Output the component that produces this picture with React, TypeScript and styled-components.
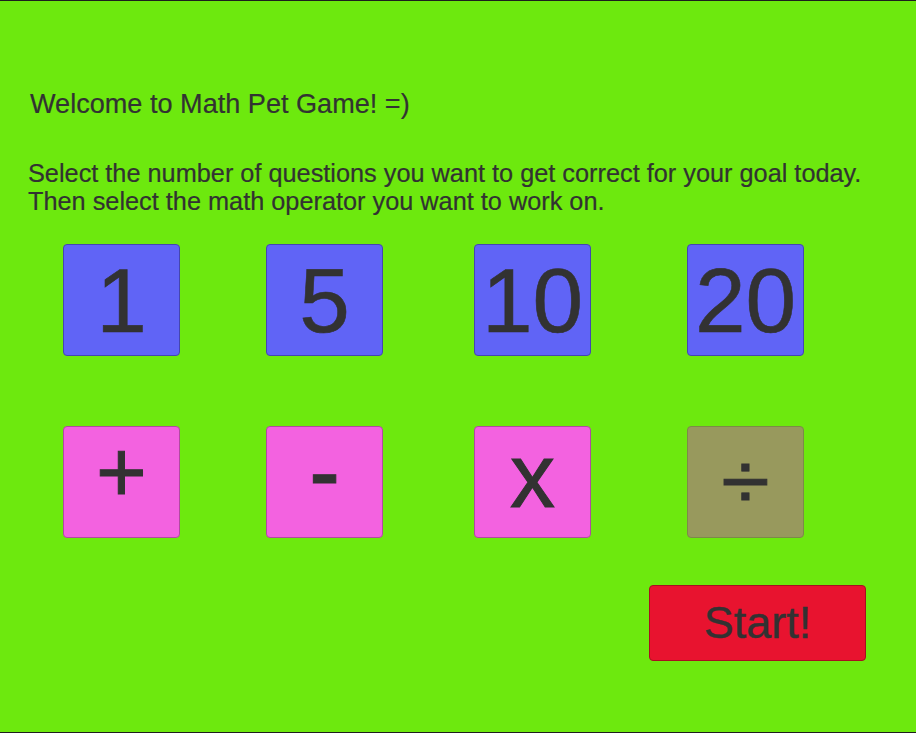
import React from "react";
import styled, { createGlobalStyle } from "styled-components";

const Global = createGlobalStyle`
  html, body { margin: 0; padding: 0; background: #6de90e; overflow: hidden; }
  body { font-family: "Liberation Sans", Arial, sans-serif; }
`;

const Page = styled.div`
  width: 916px;
  height: 733px;
  box-sizing: border-box;
  background: #6de90e;
  border-top: 1px solid #1e1e1e;
  border-bottom: 1px solid #1e1e1e;
  color: #323232;
  display: flex;
  flex-direction: column;
`;

const Welcome = styled.h1`
  margin: 87px 0 0 30px;
  font-size: 27.1px;
  line-height: 32px;
  font-weight: normal;
  -webkit-text-stroke: 0.2px #323232;
`;

const Instructions = styled.p`
  margin: 39px 0 0 28px;
  font-size: 25.3px;
  line-height: 28.3px;
  -webkit-text-stroke: 0.2px #323232;
`;

const Row = styled.div<{ $top: number }>`
  display: grid;
  grid-template-columns: 203px 208px 213px 117px;
  margin: ${(p) => p.$top}px 0 0 63px;
`;

const Tile = styled.button<{ $bg: string; $edge: string; $size: number }>`
  width: 117px;
  height: 112px;
  box-sizing: border-box;
  padding: 0;
  border: 1px solid ${(p) => p.$edge};
  border-radius: 4px;
  background: ${(p) => p.$bg};
  color: #323232;
  font-family: "Liberation Sans", Arial, sans-serif;
  font-size: ${(p) => p.$size}px;
  line-height: 1;
  display: flex;
  align-items: center;
  justify-content: center;
  cursor: pointer;
`;

const Glyph = styled.span<{ $dy: number; $sy: number; $stroke: number }>`
  display: inline-block;
  transform: translateY(${(p) => p.$dy}px) scaleY(${(p) => p.$sy});
  -webkit-text-stroke: ${(p) => p.$stroke}px #323232;
`;

const StartRow = styled.div`
  display: flex;
  justify-content: flex-end;
  margin: 47px 50px 0 0;
`;

const StartButton = styled.button`
  width: 217px;
  height: 76px;
  box-sizing: border-box;
  border: 1px solid #a81020;
  border-radius: 4px;
  background: #e8132f;
  color: #323232;
  font-family: "Liberation Sans", Arial, sans-serif;
  font-size: 45px;
  line-height: 1;
  padding: 0;
  display: flex;
  align-items: center;
  justify-content: center;
  cursor: pointer;
  -webkit-text-stroke: 0.4px #323232;
`;

const numbers = ["1", "5", "10", "20"];
const ops = [
  { label: "+", bg: "#f362e0", edge: "#b04aa0", size: 87, dy: -10, sy: 1 },
  { label: "-", bg: "#f362e0", edge: "#b04aa0", size: 92, dy: -12, sy: 1.15 },
  { label: "x", bg: "#f362e0", edge: "#b04aa0", size: 90, dy: -6, sy: 1 },
  { label: "÷", bg: "#98995d", edge: "#7c8a48", size: 88, dy: 0, sy: 0.9 },
];

export default function App() {
  return (
    <>
      <Global />
      <Page>
        <Welcome>Welcome to Math Pet Game! =)</Welcome>
        <Instructions>
          Select the number of questions you want to get correct for your goal today.
          <br />
          Then select the math operator you want to work on.
        </Instructions>
        <Row $top={28}>
          {numbers.map((n) => (
            <Tile key={n} $bg="#6064f6" $edge="#4446b0" $size={91}>
              <Glyph $dy={1} $sy={1} $stroke={0.6}>
                {n}
              </Glyph>
            </Tile>
          ))}
        </Row>
        <Row $top={70}>
          {ops.map((o) => (
            <Tile key={o.label} $bg={o.bg} $edge={o.edge} $size={o.size}>
              <Glyph $dy={o.dy} $sy={o.sy} $stroke={1}>
                {o.label}
              </Glyph>
            </Tile>
          ))}
        </Row>
        <StartRow>
          <StartButton>Start!</StartButton>
        </StartRow>
      </Page>
    </>
  );
}
